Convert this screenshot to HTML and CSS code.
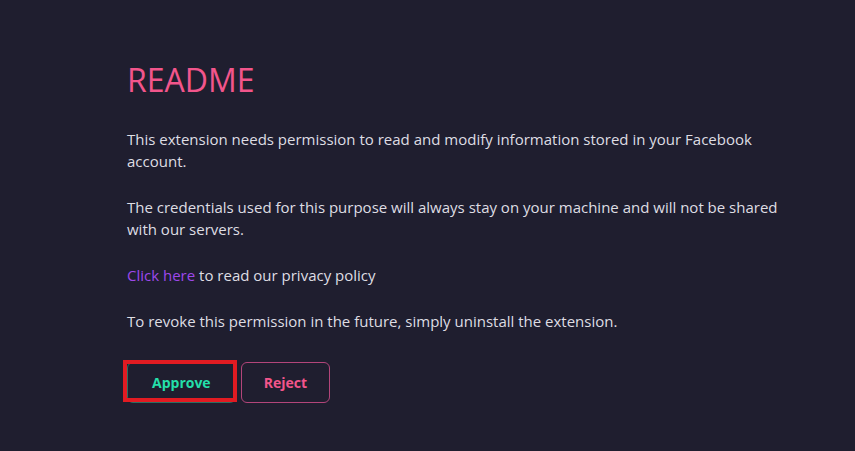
FILE: index.html
```html
<!DOCTYPE html>
<html lang="en">
<head>
  <meta charset="UTF-8" />
  <meta name="viewport" content="width=device-width, initial-scale=1" />
  <title>README</title>
  <link rel="stylesheet" href="styles.css">
</head>
<body>
  <div class="readme">
    <h1>README</h1>
    <p>This extension needs permission to read and modify information stored in your Facebook account.</p>
    <p>The credentials used for this purpose will always stay on your machine and will not be shared with our servers.</p>
    <p><a href="#">Click here</a> to read our privacy policy</p>
    <p>To revoke this permission in the future, simply uninstall the extension.</p>
    <div class="actions">
      <button class="btn approve">Approve</button>
      <button class="btn reject">Reject</button>
    </div>
  </div>
</body>
</html>
```

FILE: styles.css
```css
* {
  margin: 0;
  padding: 0;
  box-sizing: border-box;
}
body {
  font-family: 'Open Sans', sans-serif;
  background: #1f1e2f;
  color: #dedde3;
  height: 100vh;
}
.readme {
  padding: 58px 0 0 127px;
  width: 800px;
}
.readme h1 {
  font-size: 32px;
  font-weight: 400;
  color: #f2558b;
  line-height: 44px;
  margin-bottom: 26px;
}
.readme p {
  font-size: 15px;
  line-height: 22px;
  margin-bottom: 24px;
}
.readme a {
  color: #9d48ea;
  text-decoration: none;
}
.actions {
  display: flex;
  gap: 5px;
  margin-top: 30px;
}
.btn {
  font-family: inherit;
  font-size: 14px;
  font-weight: 700;
  height: 41px;
  padding: 0 24px;
  border-radius: 6px;
  background: transparent;
  cursor: pointer;
}
.approve {
  position: relative;
  color: #24dfa9;
  border: 1px solid #2b6f62;
}
.approve::after {
  content: "";
  position: absolute;
  top: -3px;
  left: -5px;
  right: -2px;
  bottom: 0;
  border: 4px solid #e11b22;
}
.reject {
  padding: 0 22px;
  color: #f2558b;
  border: 1px solid #b3457a;
}
```
